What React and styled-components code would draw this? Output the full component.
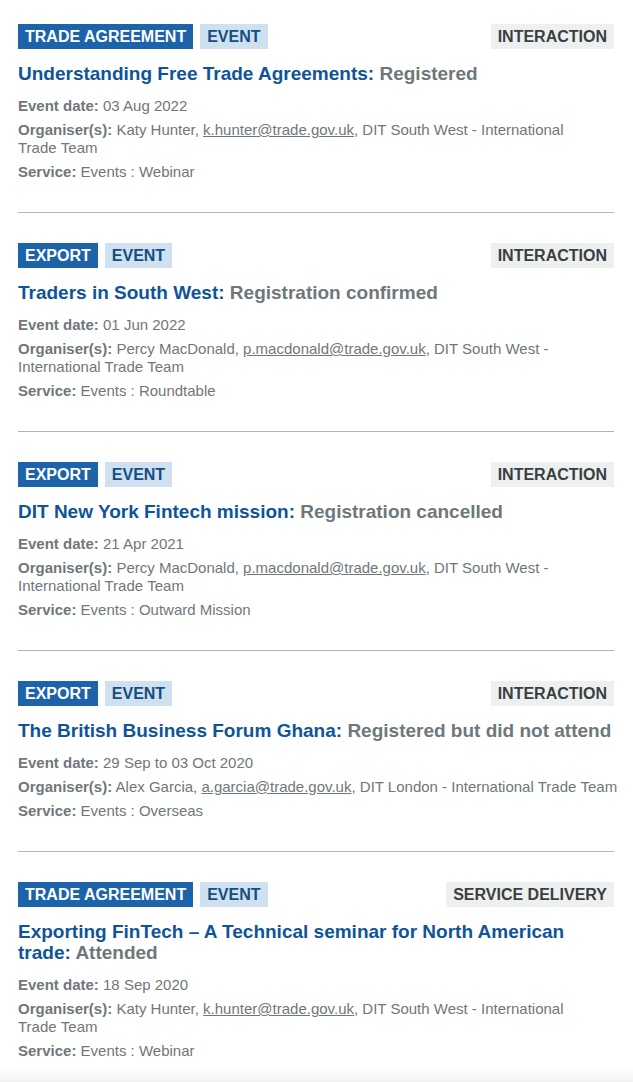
import React from 'react';
import styled, { createGlobalStyle, css } from 'styled-components';

const GlobalStyle = createGlobalStyle`
    body{
        margin:0;
        background:#fff;
        font-family:"Liberation Sans", Arial, sans-serif;
    }
`

// team names keep "Trade Team" together, as the reference wraps them
const SW_TEAM = 'DIT South West - International Trade\u00a0Team'

const events = [
    {
        tags: ['TRADE AGREEMENT', 'EVENT'],
        kind: 'INTERACTION',
        name: 'Understanding Free Trade Agreements',
        status: 'Registered',
        date: '03 Aug 2022',
        person: 'Katy Hunter',
        email: 'k.hunter@trade.gov.uk',
        team: SW_TEAM,
        service: 'Events : Webinar',
    },
    {
        tags: ['EXPORT', 'EVENT'],
        kind: 'INTERACTION',
        name: 'Traders in South West',
        status: 'Registration confirmed',
        date: '01 Jun 2022',
        person: 'Percy MacDonald',
        email: 'p.macdonald@trade.gov.uk',
        team: SW_TEAM,
        service: 'Events : Roundtable',
    },
    {
        tags: ['EXPORT', 'EVENT'],
        kind: 'INTERACTION',
        name: 'DIT New York Fintech mission',
        status: 'Registration cancelled',
        date: '21 Apr 2021',
        person: 'Percy MacDonald',
        email: 'p.macdonald@trade.gov.uk',
        team: SW_TEAM,
        service: 'Events : Outward Mission',
    },
    {
        tags: ['EXPORT', 'EVENT'],
        kind: 'INTERACTION',
        name: 'The British Business Forum Ghana',
        status: 'Registered but did not attend',
        date: '29 Sep to 03 Oct 2020',
        person: 'Alex Garcia',
        email: 'a.garcia@trade.gov.uk',
        team: 'DIT London - International Trade\u00a0Team',
        service: 'Events : Overseas',
    },
    {
        tags: ['TRADE AGREEMENT', 'EVENT'],
        kind: 'SERVICE DELIVERY',
        name: 'Exporting FinTech – A Technical seminar for North American trade',
        status: 'Attended',
        date: '18 Sep 2020',
        person: 'Katy Hunter',
        email: 'k.hunter@trade.gov.uk',
        team: SW_TEAM,
        service: 'Events : Webinar',
    },
]

const ListStyle = styled.ul`
    list-style:none;
    margin:0;
    padding:24px 19px 0 18px;
`

const ItemStyle = styled.li`
    padding-bottom:31px;
    border-bottom:1px solid #b1b4b6;
    margin-bottom:30px;
    &:last-child{
        border-bottom:none;
        margin-bottom:0;
        padding-bottom:26px;
    }
`

const TagRow = styled.div`
    display:flex;
    justify-content:space-between;
    align-items:flex-start;
    >div{
        display:flex;
        gap:7px;
    }
`

const tagColors = {
    blue: css`background:#1d63a9; color:#fff;`,
    light: css`background:#cfe0f0; color:#144e81;`,
    grey: css`background:#eeefef; color:#383f43;`,
}

const Tag = styled.span`
    display:inline-block;
    height:25px;
    line-height:25px;
    padding:0 7px;
    font-size:16px;
    font-weight:700;
    text-transform:uppercase;
    ${({ $color }) => tagColors[$color]}
`

const Title = styled.h3`
    margin:14px 0 13px;
    font-size:19px;
    line-height:21px;
    font-weight:700;
    color:#0f5499;
    span{
        color:#6f777b;
    }
`

const Meta = styled.div`
    margin-right:-8px;
`

const MetaRow = styled.p`
    margin:0 0 6px;
    font-size:15px;
    line-height:18px;
    color:#6f777b;
    b{
        font-weight:700;
    }
    a{
        color:#6f777b;
        text-decoration:underline;
    }
    &:last-child{
        margin-bottom:0;
    }
`

const BottomFade = styled.div`
    position:fixed;
    left:0;
    right:0;
    bottom:0;
    height:14px;
    background:linear-gradient(rgba(240,240,240,0), #f2f2f2);
    pointer-events:none;
`

const EventItem = ({ ev }) => {
    return (
        <ItemStyle>
            <TagRow>
                <div>
                    <Tag $color="blue">{ev.tags[0]}</Tag>
                    <Tag $color="light">{ev.tags[1]}</Tag>
                </div>
                <Tag $color="grey">{ev.kind}</Tag>
            </TagRow>
            <Title>{ev.name}: <span>{ev.status}</span></Title>
            <Meta>
                <MetaRow><b>Event date:</b> {ev.date}</MetaRow>
                <MetaRow>
                    <b>Organiser(s):</b> {ev.person}, <a href="#">{ev.email}</a>, {ev.team}
                </MetaRow>
                <MetaRow><b>Service:</b> {ev.service}</MetaRow>
            </Meta>
        </ItemStyle>
    )
}

const App = () => {
    return (
        <>
            <GlobalStyle />
            <ListStyle>
                {events.map((ev, index) => <EventItem key={index} ev={ev} />)}
            </ListStyle>
            <BottomFade />
        </>
    );
};

export default App;
